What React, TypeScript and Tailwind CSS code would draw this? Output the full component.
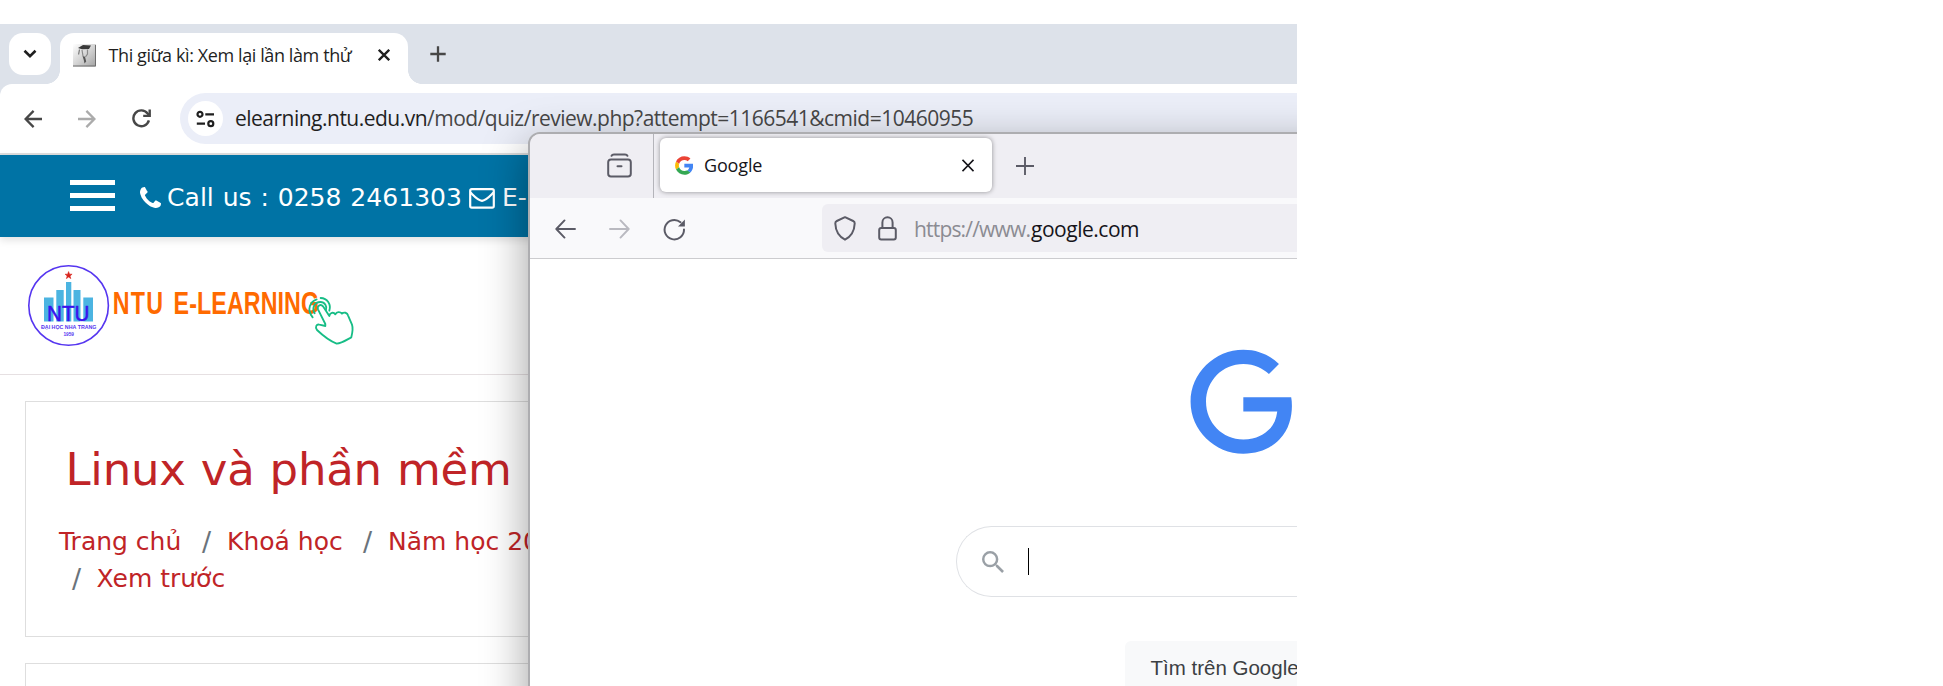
import React from "react";

const chromeFont = "font-['Open_Sans','Noto_Sans',sans-serif]";
const siteFont = "font-['DejaVu_Sans',sans-serif]";

function Favicon() {
  return (
    <svg width="23" height="23" viewBox="0 0 23 23" className="shrink-0">
      <defs>
        <linearGradient id="fav" x1="0" y1="0" x2="1" y2="1">
          <stop offset="0" stopColor="#ffffff" />
          <stop offset="0.5" stopColor="#d4d4d4" />
          <stop offset="1" stopColor="#a2a2a2" />
        </linearGradient>
      </defs>
      <rect width="23" height="22.5" fill="url(#fav)" />
      <path d="M0 22H22.5V1" fill="none" stroke="#6d6d6d" strokeWidth="1" />
      <path d="M5 4 L10 1 L18 1.6 L16 5 L9 5.2 Z" fill="#3a3a3a" />
      <path d="M6.5 5.5 L5.6 10.5" stroke="#777" strokeWidth="1.2" />
      <path d="M9 6 L10 12 M14.5 5.5 L14.5 10 L12.5 13" fill="none" stroke="#8a8a8a" strokeWidth="1.2" />
      <path d="M9.5 12 L12 12.8 L13.2 17.5 L11.5 19.5 L10.8 16 Z" fill="#555" />
    </svg>
  );
}

function ChromeTabs() {
  return (
    <div className="flex h-[60px] shrink-0 items-start bg-[#dde2ea] pl-[9px]">
      <div className="mt-[9px] flex h-[42px] w-[42px] items-center justify-center rounded-[14px] bg-white">
        <svg width="14" height="10" viewBox="0 0 14 10" fill="none" stroke="#1f1f1f" strokeWidth="2.6">
          <path d="M1.5 1.8 L7 7.2 L12.5 1.8" />
        </svg>
      </div>
      <div className="-ml-[5px] mt-[46px] h-[14px] w-[14px] bg-[radial-gradient(circle_at_0_0,transparent_13.6px,#fff_14.2px)]" />
      <div className="mt-[9px] flex h-[51px] w-[348px] items-center rounded-t-[14px] bg-white pb-[6px] pl-[13px]">
        <Favicon />
        <span className={`${chromeFont} ml-[12.5px] w-[269px] whitespace-nowrap text-[18px] tracking-[-0.40px] text-[#1f1f1f]`}>
          Thi giữa kì: Xem lại lần làm thử
        </span>
        <svg width="12" height="12" viewBox="0 0 12 12" fill="none" stroke="#1f1f1f" strokeWidth="2.3" className="-mt-[2px]">
          <path d="M0.8 0.8 L11.2 11.2 M11.2 0.8 L0.8 11.2" />
        </svg>
      </div>
      <div className="mt-[46px] h-[14px] w-[14px] bg-[radial-gradient(circle_at_14px_0,transparent_13.6px,#fff_14.2px)]" />
      <svg width="16" height="16" viewBox="0 0 16 16" fill="none" stroke="#474747" strokeWidth="2.3" className="ml-[8px] mt-[22px]">
        <path d="M8 0.3 V15.7 M0.3 8 H15.7" />
      </svg>
    </div>
  );
}

function ChromeToolbar() {
  return (
    <div className="shrink-0 bg-[#dde2ea]">
      <div className="flex h-[69px] items-center rounded-tl-[12px] bg-white pl-[24px]">
        <svg width="18" height="18" viewBox="0 0 18 18" fill="none" stroke="#474747" strokeWidth="2.3">
          <path d="M18 9 H1.8 M9.6 0.9 L1.6 9 L9.6 17.1" />
        </svg>
        <svg width="18" height="18" viewBox="0 0 18 18" fill="none" stroke="#ababab" strokeWidth="2.3" className="ml-[36px]">
          <path d="M0 9 H16.2 M8.4 0.9 L16.4 9 L8.4 17.1" />
        </svg>
        <svg width="19" height="19" viewBox="0 0 19 19" fill="none" stroke="#474747" strokeWidth="2.4" className="ml-[36px]">
          <path d="M16.9 11.4 A7.9 7.9 0 1 1 15.6 4.5 L17.6 6.6" />
          <path d="M17.7 0.4 V6.9 H11.2" />
        </svg>
        <div className="ml-[29px] flex h-[51px] flex-1 items-center rounded-l-full bg-[#ebeef8] pl-[8px]">
          <div className="flex h-[35px] w-[35px] items-center justify-center rounded-full bg-white">
            <svg width="19" height="18" viewBox="0 0 19 18" fill="none" stroke="#1f1f1f" strokeWidth="2.2">
              <circle cx="4" cy="4.3" r="2.5" />
              <path d="M9.3 4.3 H18 M0.8 13.7 H9" />
              <circle cx="14.8" cy="13.7" r="2.5" />
            </svg>
          </div>
          <span className={`${chromeFont} ml-[12px] mt-[1px] whitespace-nowrap text-[21px] tracking-[-0.51px] text-[#474747]`}>
            <span className="text-[#1f1f1f]">elearning.ntu.edu.vn</span>
            /mod/quiz/review.php?attempt=1166541&amp;cmid=10460955
          </span>
        </div>
      </div>
      <div className="h-[2px] bg-[#dedede]" />
    </div>
  );
}

function ContactBar() {
  return (
    <div className={`${siteFont} relative flex h-[82px] shrink-0 items-center bg-[#0073a5] pl-[70px] text-[25px] text-white shadow-[0_3px_8px_rgba(0,0,0,0.12)]`}>
      <div className="-mt-[1px] flex w-[45px] flex-col gap-[8px]">
        <div className="h-[5px] bg-white" />
        <div className="h-[5px] bg-white" />
        <div className="h-[5px] bg-white" />
      </div>
      <svg width="21" height="21" viewBox="0 0 1408 1408" fill="currentColor" className="ml-[25px] mt-[3px]">
        <path d="M1408 1112q0 27-10 70.500t-21 68.500q-21 50-122 106-94 51-186 51-27 0-52.500-3.500t-57.500-12.500-47.500-14.500-55.500-20.500-49-18q-98-35-175-83-128-79-264.500-215.500T152 776.500Q104 699.500 69 601.500q-3-9-18-49t-20.500-55.500-14.500-47.500-12.500-57.500T0 339q0-92 51-186Q107 52 157 31q25-11 68.500-21T296 0q14 0 21 3 18 6 53 76 11 19 30 54t35 63.500 31 53.500q3 4 17.500 25t21.500 35.500 7 28.500q0 20-28.500 50t-62 55-62 53-28.500 46q0 9 5 22.500t8.500 20.500 14 24 11.500 19q76 137 174 235t235 174q2 1 19 11.500t24 14 20.500 8.500 22.500 5q18 0 46-28.500t53-62 55-62 50-28.500q14 0 28.500 7t35.500 21.500 25 17.500q25 15 53.500 31t63.500 35 54 30q70 35 76 53 3 7 3 21z" />
      </svg>
      <span className="ml-[6px] mt-[4px] w-[302px] whitespace-nowrap tracking-[0.05px] [word-spacing:0.8px]">Call us : 0258 2461303</span>
      <svg width="26" height="21" viewBox="0 0 26 21" fill="none" stroke="currentColor" strokeWidth="2.2" strokeLinejoin="round" className="mt-[4px]">
        <rect x="1.2" y="1.2" width="23.6" height="18.400" rx="1.600" />
        <path d="M1.500 4.500 C6 9 9 12.500 13 12.800 C17 12.500 20 9 24.500 4.500" />
      </svg>
      <span className="ml-[7px] mt-[4px]">E-</span>
    </div>
  );
}

function NtuLogo() {
  return (
    <svg width="340" height="100" viewBox="0 0 340 100">
      <circle cx="48.600" cy="50.500" r="39.800" fill="#fff" stroke="#5636f0" strokeWidth="1.600" />
      <path d="M48.600 16.600 L49.500 19.200 L52.100 19.200 L50 20.900 L50.800 23.600 L48.600 22 L46.400 23.600 L47.200 20.900 L45.100 19.200 L47.700 19.200 Z" fill="#d8241c" stroke="#d8241c" strokeWidth="0.600" />
      <path d="M24 42.500 h9.500 v24 h-9.500 Z M36.300 35 h7.400 v31.500 h-7.400 Z M46 27 h5.300 v39.500 h-5.300 Z M53.500 35 h7 v31.500 h-7 Z M63.300 42.500 h9.700 v24 h-9.700 Z" fill="#4bb4e1" />
      <text x="27" y="65.700" textLength="42.500" lengthAdjust="spacingAndGlyphs" fontSize="21.500" fill="#3a12ee" stroke="#3a12ee" strokeWidth="0.500" fontFamily="Liberation Sans, sans-serif">NTU</text>
      <text x="21" y="74.400" textLength="55.500" lengthAdjust="spacingAndGlyphs" fontSize="6" fontWeight="bold" fill="#5636f0" fontFamily="Liberation Sans, sans-serif">ĐẠI HỌC NHA TRANG</text>
      <text x="43.500" y="81" textLength="10.500" lengthAdjust="spacingAndGlyphs" fontSize="5" fontWeight="bold" fill="#5636f0" fontFamily="Liberation Sans, sans-serif">1959</text>
      <g transform="translate(92.800 58.500) scale(0.75 1)" fill="#ff6a00" fontSize="31" fontWeight="bold" fontFamily="Liberation Sans, sans-serif">
        <text textLength="67" lengthAdjust="spacing">NTU</text>
        <text x="81" textLength="194" lengthAdjust="spacing">E-LEARNING</text>
      </g>
      <g transform="translate(260 25) scale(0.3333)" fill="none" stroke="#17bd86" strokeWidth="5.500" strokeLinejoin="round" strokeLinecap="round">
        <path d="M136 132 L114 88 C110 78 122 70 129 79 L148 108 C150 98 160 95 166 103 C170 95 180 94 186 101 C192 95 202 98 204 106 L216 134 C220 146 217 160 214 172 C202 178 186 190 170 191 C152 184 130 168 111 150 C104 140 110 132 118 134 L136 138 Z" />
        <path d="M104 100 C94 84 104 66 121 66 C135 66 142 80 138 90" />
        <path d="M98 112 C78 88 92 64 110 58 M122 54 C142 54 154 74 148 92" />
      </g>
    </svg>
  );
}

function Crumb({ children }: { children: React.ReactNode }) {
  return <span className="text-[#c02427]">{children}</span>;
}

function Slash() {
  return <span className="text-[27px] text-[#6a737b]">/</span>;
}

function ChromeWindow() {
  return (
    <div className="flex h-full flex-col pt-[24px]">
      <ChromeTabs />
      <ChromeToolbar />
      <ContactBar />
      <div className="h-[138px] shrink-0 border-b border-[#e6e0e2] pl-[20px] pt-[18px]">
        <NtuLogo />
      </div>
      <div className="mt-[26px] ml-[25px] h-[236px] shrink-0 border border-r-0 border-[#dedede]">
        <div className={`${siteFont} ml-[39.500px] mt-[38px] h-[60px] whitespace-nowrap text-[45px] leading-[60px] tracking-[-0.220px] text-[#c02427] [word-spacing:1px]`}>
          Linux và phần mềm
        </div>
        <div className={`${siteFont} ml-[33px] mt-[23px] whitespace-nowrap text-[25px] leading-[37px]`}>
          <div className="flex h-[37px]">
            <span className="w-[143px]"><Crumb>Trang chủ</Crumb></span>
            <span className="w-[25px]"><Slash /></span>
            <span className="w-[136px]"><Crumb>Khoá học</Crumb></span>
            <span className="w-[25px]"><Slash /></span>
            <Crumb>Năm học 2023</Crumb>
          </div>
          <div className="flex h-[37px] pl-[13px]">
            <span className="w-[24.500px]"><Slash /></span>
            <Crumb>Xem trước</Crumb>
          </div>
        </div>
      </div>
      <div className="ml-[25px] mt-[26px] h-[40px] shrink-0 border border-r-0 border-b-0 border-[#dedede]" />
    </div>
  );
}

function GoogleMark() {
  return (
    <svg width="18.500" height="19" viewBox="0 0 47 48">
      <path fill="#FBBC05" d="M9.827 24c0-1.524.253-2.986.705-4.356L2.623 13.604A23.450 23.450 0 0 0 .213 24c0 3.737.868 7.261 2.407 10.388l7.905-6.051A13.880 13.880 0 0 1 9.827 24" />
      <path fill="#EB4335" d="M23.714 10.133c3.311 0 6.302 1.174 8.652 3.094l6.836-6.827C35.036 2.773 29.695.533 23.714.533 14.427.533 6.445 5.844 2.623 13.604l7.909 6.040c1.822-5.532 7.017-9.511 13.182-9.511" />
      <path fill="#34A853" d="M23.714 37.867c-6.165 0-11.360-3.979-13.182-9.511l-7.909 6.038c3.822 7.761 11.804 13.072 21.091 13.072 5.732 0 11.205-2.035 15.312-5.848l-7.507-5.804c-2.118 1.334-4.785 2.053-7.805 2.053" />
      <path fill="#4285F4" d="M46.145 24c0-1.387-.213-2.880-.534-4.267H23.714V28.800h12.604c-.630 3.091-2.346 5.468-4.800 7.014l7.507 5.804C43.339 37.614 46.145 31.649 46.145 24" />
    </svg>
  );
}

function FirefoxTabs() {
  return (
    <div className="flex h-[64px] bg-[#efeef3]">
      <div className="flex w-[124px] items-center border-r border-[#b4b4ba] pl-[77px]">
        <svg width="25" height="25" viewBox="0 0 25 25" fill="none" stroke="#5b5b66" strokeWidth="2" strokeLinecap="round" className="-mt-[2px]">
          <rect x="1.200" y="6.500" width="22.600" height="17" rx="2.800" />
          <path d="M4.500 2.800 C5 1.600 6 1.400 7 1.400 H18 C19 1.400 20 1.600 20.500 2.800" />
          <path d="M10.500 13.300 H14.500" />
        </svg>
      </div>
      <div className="ml-[6px] mt-[4px] flex h-[54px] w-[332px] items-center rounded-[6px] bg-white pl-[14.500px] shadow-[0_0_5px_rgba(0,0,0,0.4)]">
        <GoogleMark />
        <span className={`${chromeFont} ml-[11px] w-[258px] text-[18px] tracking-[-0.150px] text-[#15141a]`}>Google</span>
        <svg width="12" height="13" viewBox="0 0 12 13" fill="none" stroke="#15141a" strokeWidth="1.600">
          <path d="M0.500 0.800 L11.500 12.200 M11.500 0.800 L0.500 12.200" />
        </svg>
      </div>
      <svg width="18" height="18" viewBox="0 0 18 18" fill="none" stroke="#5b5b66" strokeWidth="1.900" className="ml-[23.500px] mt-[23px]">
        <path d="M9 0 V18 M0 9 H18" />
      </svg>
    </div>
  );
}

function FirefoxToolbar() {
  return (
    <div className="flex h-[61px] items-center border-b border-[#cccccf] bg-[#f9f9fb] pl-[25px]">
      <svg width="21" height="20" viewBox="0 0 21 20" fill="none" stroke="#5b5b66" strokeWidth="1.900" strokeLinecap="round" strokeLinejoin="round" className="mt-[2px]">
        <path d="M20 10 H1.500 M9.500 1.400 L1.300 10 L9.500 18.600" />
      </svg>
      <svg width="21" height="20" viewBox="0 0 21 20" fill="none" stroke="#b9b9c0" strokeWidth="1.900" strokeLinecap="round" strokeLinejoin="round" className="ml-[33px] mt-[2px]">
        <path d="M1 10 H19.500 M11.500 1.400 L19.700 10 L11.500 18.600" />
      </svg>
      <svg width="23" height="23" viewBox="0 0 23 23" fill="none" stroke="#5b5b66" strokeWidth="2" className="ml-[33px] mt-[3px]">
        <path d="M21 11.500 A9.700 9.700 0 1 1 17.500 4.200" strokeLinecap="round" />
        <path d="M21.900 1.500 V8.400 H15 Z" fill="#5b5b66" stroke="none" />
      </svg>
      <div className="ml-[136px] flex h-[48px] flex-1 items-center rounded-l-[6px] bg-[#efeef3] pl-[12px]">
        <svg width="22" height="25" viewBox="0 0 22 25" fill="none" stroke="#5b5b66" strokeWidth="2" strokeLinejoin="round">
          <path d="M11 1.200 L19.200 5 C20.300 5.500 20.800 6.300 20.700 7.500 C20.400 14.500 17.500 20.300 11 23.700 C4.500 20.300 1.600 14.500 1.300 7.500 C1.200 6.300 1.700 5.500 2.800 5 Z" />
        </svg>
        <svg width="19" height="25" viewBox="0 0 19 25" fill="none" stroke="#5b5b66" strokeWidth="2" className="ml-[21.500px]">
          <rect x="1.200" y="12" width="16.600" height="11.600" rx="2" />
          <path d="M4.400 12 V6.500 C4.400 -0.400 14.600 -0.400 14.600 6.500 V12" />
        </svg>
        <span className={`${chromeFont} ml-[17.500px] mt-[3px] flex whitespace-nowrap text-[21px] text-[#8b8b92]`}>
          <span className="w-[117px] tracking-[-0.820px]">https://www.</span>
          <span className="tracking-[-0.480px] text-[#15141a]">google.com</span>
        </span>
      </div>
    </div>
  );
}

function GooglePage() {
  return (
    <div className="flex flex-1 flex-col bg-white">
      <div className="ml-[659.500px] mt-[89.500px] flex">
        <svg width="150" height="106" viewBox="0 0 99.300 70.200" className="shrink-0">
          <path fill="#4285F4" d="M35.290 41.410V32H67c.310 1.640.470 3.580.470 5.680 0 7.060-1.930 15.790-8.150 22.010-6.050 6.300-13.780 9.660-24.020 9.660C16.320 69.350.360 53.890.360 34.910.360 15.930 16.320.470 35.300.470c10.500 0 17.980 4.120 23.600 9.490l-6.640 6.640c-4.030-3.780-9.490-6.720-16.970-6.720-13.860 0-24.700 11.170-24.700 25.030 0 13.860 10.840 25.030 24.700 25.030 8.990 0 14.110-3.610 17.390-6.890 2.660-2.660 4.410-6.460 5.100-11.650l-22.490.010z" />
          <circle cx="92.900" cy="44.800" r="17.600" fill="none" stroke="#EA4335" strokeWidth="8.500" className="translate-x-[0.500px]" />
        </svg>
      </div>
      <div className="ml-[426px] mt-[71.500px] flex h-[71px] shrink-0 items-center rounded-l-full border border-r-0 border-[#dfe1e5] pl-[24.500px]">
        <svg width="22" height="22" viewBox="3 3 17.500 17.500" fill="#9aa0a6">
          <path d="M15.500 14h-.790l-.280-.270A6.471 6.471 0 0 0 16 9.500 6.500 6.500 0 1 0 9.500 16c1.610 0 3.090-.590 4.230-1.570l.270.280v.790l5 4.990L20.490 19l-4.990-5zm-6 0C7.010 14 5 11.990 5 9.500S7.010 5 9.500 5 14 7.010 14 9.500 11.990 14 9.500 14z" />
        </svg>
        <div className="ml-[24.500px] h-[27px] w-px bg-black" />
      </div>
      <div className="ml-[595px] mt-[44px] h-[54px] shrink-0 whitespace-nowrap rounded-l-[6px] bg-[#f8f9fa] pl-[25.500px] font-['Liberation_Sans',sans-serif] text-[20.500px] leading-[54px] text-[#3c4043]">
        Tìm trên Google
      </div>
    </div>
  );
}

export default function App() {
  return (
    <div className="h-[686px] w-full overflow-hidden bg-white">
      <div className="relative h-[686px] w-[1297px] overflow-hidden bg-white">
        <ChromeWindow />
        <div className="absolute left-[528px] top-[132px] flex h-[760px] w-[1100px] flex-col overflow-hidden rounded-tl-[12px] border-2 border-[#adadb0] bg-[#efeef3] shadow-[0_14px_46px_rgba(0,0,0,0.38)]">
          <div className="flex w-[767px] flex-1 flex-col">
            <FirefoxTabs />
            <FirefoxToolbar />
            <GooglePage />
          </div>
        </div>
      </div>
    </div>
  );
}
